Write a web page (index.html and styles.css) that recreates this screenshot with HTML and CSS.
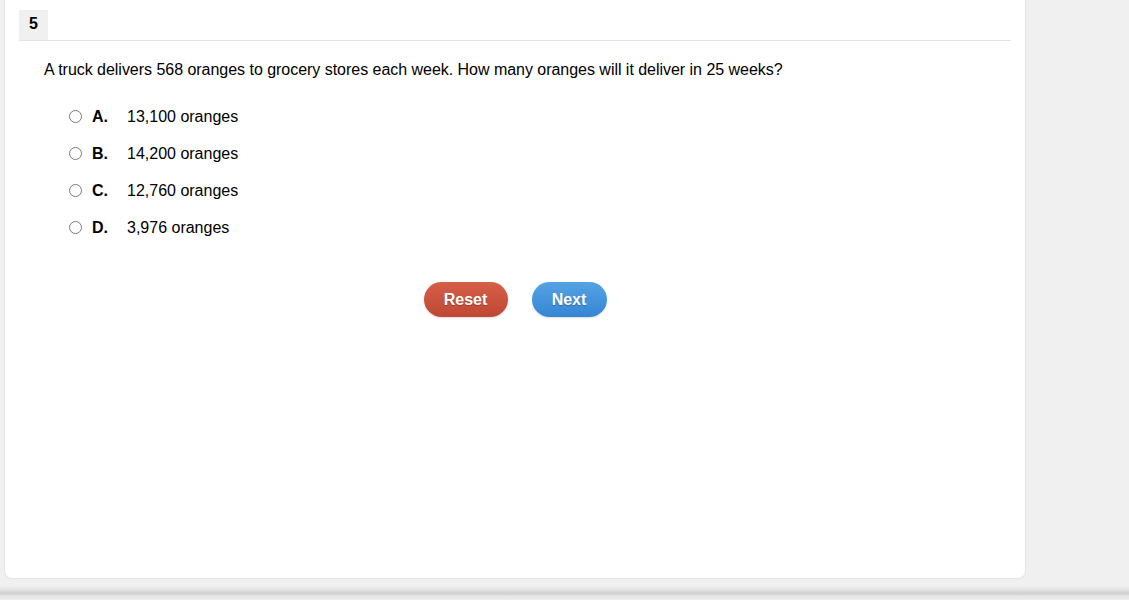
FILE: index.html
```html
<!DOCTYPE html>
<html>
<head>
<meta charset="utf-8">
<link rel="stylesheet" href="styles.css">
</head>
<body>
<div class="page">
  <div class="card">
    <div class="head">
      <div class="qnum">5</div>
    </div>
    <p class="question">A truck delivers 568 oranges to grocery stores each week. How many oranges will it deliver in 25 weeks?</p>
    <ul class="options">
      <li class="opt"><span class="radio"></span><span class="letter">A.</span><span class="text">13,100 oranges</span></li>
      <li class="opt"><span class="radio"></span><span class="letter">B.</span><span class="text">14,200 oranges</span></li>
      <li class="opt"><span class="radio"></span><span class="letter">C.</span><span class="text">12,760 oranges</span></li>
      <li class="opt"><span class="radio"></span><span class="letter">D.</span><span class="text">3,976 oranges</span></li>
    </ul>
    <div class="actions">
      <button class="btn reset">Reset</button>
      <button class="btn next">Next</button>
    </div>
  </div>
  <div class="gap"></div>
  <div class="bar"></div>
</div>
</body>
</html>
```
FILE: styles.css
```css
html, body {
  margin: 0;
  padding: 0;
  background: #f0f0f0;
  font-family: "Liberation Sans", Arial, sans-serif;
  color: #000;
}
.page {
  width: 1129px;
  height: 600px;
  overflow: hidden;
}
.card {
  box-sizing: border-box;
  margin-left: 4px;
  width: 1022px;
  height: 579px;
  background: #fff;
  border: 1px solid #e4e4e4;
  border-top: none;
  border-radius: 0 0 8px 8px;
  padding: 10px 14px 0 14px;
}
.head {
  border-bottom: 1px solid #e3e3e3;
  display: flex;
}
.qnum {
  width: 29px;
  height: 30px;
  background: #f0f0f0;
  font-weight: bold;
  font-size: 16px;
  line-height: 27px;
  box-sizing: border-box;
  padding-left: 10px;
}
.question {
  margin: 19px 0 0 25px;
  font-size: 16px;
  line-height: 20px;
  letter-spacing: -0.03px;
}
.options {
  list-style: none;
  margin: 27px 0 0 50px;
  padding: 0;
  display: flex;
  flex-direction: column;
  gap: 17px;
}
.opt {
  display: flex;
  align-items: center;
  height: 20px;
  font-size: 16px;
}
.radio {
  box-sizing: border-box;
  width: 13px;
  height: 13px;
  border: 1px solid #7a7a7a;
  border-radius: 50%;
  background: #fff;
  margin-right: 10px;
  margin-top: -1px;
}
.letter {
  font-weight: bold;
  width: 35px;
}
.actions {
  display: flex;
  justify-content: center;
  gap: 24px;
  margin-top: 44px;
}
.btn {
  border: none;
  height: 35px;
  border-radius: 18px;
  color: #fff;
  font-family: "Liberation Sans", Arial, sans-serif;
  font-weight: bold;
  font-size: 16px;
  padding: 0;
  text-shadow: 0 1px 1px rgba(0,0,0,0.25);
  box-shadow: 0 1px 2px rgba(0,0,0,0.15);
}
.reset {
  width: 84px;
  background: linear-gradient(#d65f48, #bf4834);
}
.next {
  width: 75px;
  background: linear-gradient(#55a3e3, #3685d5);
}
.gap {
  height: 7px;
}
.bar {
  height: 14px;
  background: linear-gradient(#eeeeee 0, #e2e2e2 30%, #cfcfcf 50%, #e6e6e6 75%, #ededed 100%);
}
```
